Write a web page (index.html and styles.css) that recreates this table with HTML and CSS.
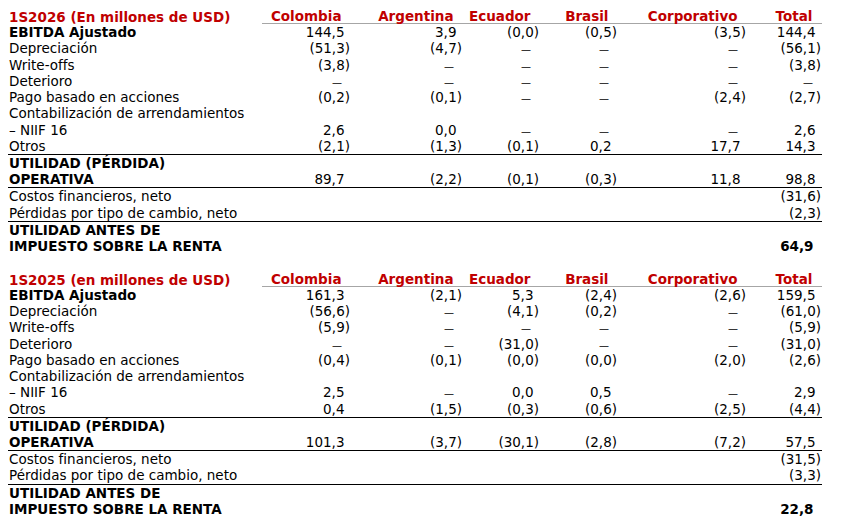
FILE: index.html
```html
<!DOCTYPE html>
<html lang="es">
<head>
<meta charset="utf-8">
<title>Conciliación EBITDA Ajustado</title>
<link rel="stylesheet" href="styles.css">
</head>
<body>
<table class="fin">
  <colgroup>
    <col class="c-lbl"><col class="c-col"><col class="c-arg"><col class="c-ecu"><col class="c-bra"><col class="c-cor"><col class="c-tot">
  </colgroup>
  <thead>
    <tr>
      <th class="title">1S2026 (En millones de USD)</th>
      <th>Colombia</th><th>Argentina</th><th>Ecuador</th><th>Brasil</th><th>Corporativo</th><th>Total</th>
    </tr>
  </thead>
  <tbody>
    <tr><td class="lbl b">EBITDA Ajustado</td><td class="num"><span class="p">144,5</span></td><td class="num"><span class="p">3,9</span></td><td class="num">(0,0)</td><td class="num">(0,5)</td><td class="num">(3,5)</td><td class="num"><span class="p">144,4</span></td></tr>
    <tr><td class="lbl">Depreciación</td><td class="num">(51,3)</td><td class="num">(4,7)</td><td class="num"><span class="d">—</span></td><td class="num"><span class="d">—</span></td><td class="num"><span class="d">—</span></td><td class="num">(56,1)</td></tr>
    <tr><td class="lbl">Write-offs</td><td class="num">(3,8)</td><td class="num"><span class="d">—</span></td><td class="num"><span class="d">—</span></td><td class="num"><span class="d">—</span></td><td class="num"><span class="d">—</span></td><td class="num">(3,8)</td></tr>
    <tr><td class="lbl">Deterioro</td><td class="num"><span class="d">—</span></td><td class="num"><span class="d">—</span></td><td class="num"><span class="d">—</span></td><td class="num"><span class="d">—</span></td><td class="num"><span class="d">—</span></td><td class="num"><span class="d">—</span></td></tr>
    <tr><td class="lbl">Pago basado en acciones</td><td class="num">(0,2)</td><td class="num">(0,1)</td><td class="num"><span class="d">—</span></td><td class="num"><span class="d">—</span></td><td class="num">(2,4)</td><td class="num">(2,7)</td></tr>
    <tr><td class="lbl">Contabilización de arrendamientos<br>– NIIF 16</td><td class="num"><span class="p">2,6</span></td><td class="num"><span class="p">0,0</span></td><td class="num"><span class="d">—</span></td><td class="num"><span class="d">—</span></td><td class="num"><span class="d">—</span></td><td class="num"><span class="p">2,6</span></td></tr>
    <tr class="rule"><td class="lbl">Otros</td><td class="num">(2,1)</td><td class="num">(1,3)</td><td class="num">(0,1)</td><td class="num"><span class="p">0,2</span></td><td class="num"><span class="p">17,7</span></td><td class="num"><span class="p">14,3</span></td></tr>
    <tr class="rule"><td class="lbl b">UTILIDAD (PÉRDIDA)<br>OPERATIVA</td><td class="num"><span class="p">89,7</span></td><td class="num">(2,2)</td><td class="num">(0,1)</td><td class="num">(0,3)</td><td class="num"><span class="p">11,8</span></td><td class="num"><span class="p">98,8</span></td></tr>
    <tr><td class="lbl">Costos financieros, neto</td><td></td><td></td><td></td><td></td><td></td><td class="num">(31,6)</td></tr>
    <tr class="rule"><td class="lbl">Pérdidas por tipo de cambio, neto</td><td></td><td></td><td></td><td></td><td></td><td class="num">(2,3)</td></tr>
    <tr><td class="lbl b">UTILIDAD ANTES DE<br>IMPUESTO SOBRE LA RENTA</td><td></td><td></td><td></td><td></td><td></td><td class="num b"><span class="pb">64,9</span></td></tr>
  </tbody>
</table>

<table class="fin">
  <colgroup>
    <col class="c-lbl"><col class="c-col"><col class="c-arg"><col class="c-ecu"><col class="c-bra"><col class="c-cor"><col class="c-tot">
  </colgroup>
  <thead>
    <tr>
      <th class="title">1S2025 (en millones de USD)</th>
      <th>Colombia</th><th>Argentina</th><th>Ecuador</th><th>Brasil</th><th>Corporativo</th><th>Total</th>
    </tr>
  </thead>
  <tbody>
    <tr><td class="lbl b">EBITDA Ajustado</td><td class="num"><span class="p">161,3</span></td><td class="num">(2,1)</td><td class="num"><span class="p">5,3</span></td><td class="num">(2,4)</td><td class="num">(2,6)</td><td class="num"><span class="p">159,5</span></td></tr>
    <tr><td class="lbl">Depreciación</td><td class="num">(56,6)</td><td class="num"><span class="d">—</span></td><td class="num">(4,1)</td><td class="num">(0,2)</td><td class="num"><span class="d">—</span></td><td class="num">(61,0)</td></tr>
    <tr><td class="lbl">Write-offs</td><td class="num">(5,9)</td><td class="num"><span class="d">—</span></td><td class="num"><span class="d">—</span></td><td class="num"><span class="d">—</span></td><td class="num"><span class="d">—</span></td><td class="num">(5,9)</td></tr>
    <tr><td class="lbl">Deterioro</td><td class="num"><span class="d">—</span></td><td class="num"><span class="d">—</span></td><td class="num">(31,0)</td><td class="num"><span class="d">—</span></td><td class="num"><span class="d">—</span></td><td class="num">(31,0)</td></tr>
    <tr><td class="lbl">Pago basado en acciones</td><td class="num">(0,4)</td><td class="num">(0,1)</td><td class="num">(0,0)</td><td class="num">(0,0)</td><td class="num">(2,0)</td><td class="num">(2,6)</td></tr>
    <tr><td class="lbl">Contabilización de arrendamientos<br>– NIIF 16</td><td class="num"><span class="p">2,5</span></td><td class="num"><span class="d">—</span></td><td class="num"><span class="p">0,0</span></td><td class="num"><span class="p">0,5</span></td><td class="num"><span class="d">—</span></td><td class="num"><span class="p">2,9</span></td></tr>
    <tr class="rule"><td class="lbl">Otros</td><td class="num"><span class="p">0,4</span></td><td class="num">(1,5)</td><td class="num">(0,3)</td><td class="num">(0,6)</td><td class="num">(2,5)</td><td class="num">(4,4)</td></tr>
    <tr class="rule"><td class="lbl b">UTILIDAD (PÉRDIDA)<br>OPERATIVA</td><td class="num"><span class="p">101,3</span></td><td class="num">(3,7)</td><td class="num">(30,1)</td><td class="num">(2,8)</td><td class="num">(7,2)</td><td class="num"><span class="p">57,5</span></td></tr>
    <tr><td class="lbl">Costos financieros, neto</td><td></td><td></td><td></td><td></td><td></td><td class="num">(31,5)</td></tr>
    <tr class="rule"><td class="lbl">Pérdidas por tipo de cambio, neto</td><td></td><td></td><td></td><td></td><td></td><td class="num">(3,3)</td></tr>
    <tr><td class="lbl b">UTILIDAD ANTES DE<br>IMPUESTO SOBRE LA RENTA</td><td></td><td></td><td></td><td></td><td></td><td class="num b"><span class="pb">22,8</span></td></tr>
  </tbody>
</table>
</body>
</html>
```

FILE: styles.css
```css
body {
  margin: 0;
  padding: 7px 0 0 8px;
  background: #ffffff;
  color: #000000;
  font-family: "DejaVu Sans", Verdana, sans-serif;
  font-size: 13.5px;
}

.fin {
  width: 814px;
  table-layout: fixed;
  border-collapse: separate;
  border-spacing: 0;
}

.fin + .fin {
  margin-top: 15.5px;
}

.c-lbl { width: 254px; }
.c-col { width: 89px; }
.c-arg { width: 112px; }
.c-ecu { width: 77px; }
.c-bra { width: 78px; }
.c-cor { width: 129px; }
.c-tot { width: 75px; }

.fin th,
.fin td {
  padding: 0;
  line-height: 16.22px;
  font-weight: normal;
  vertical-align: bottom;
}

.fin th {
  color: #c00000;
  font-weight: bold;
  text-align: right;
  padding: 2px 9.5px 0 0;
  line-height: 14.22px;
  border-bottom: 1px solid #a6a6a6;
  white-space: nowrap;
}

.fin th.title {
  text-align: left;
  padding-left: 1px;
  padding-right: 0;
  border-bottom: none;
}

.fin td.lbl {
  text-align: left;
  padding-left: 1px;
  white-space: nowrap;
}

.fin td.num {
  text-align: right;
  padding-right: 1px;
  white-space: nowrap;
}

.fin tr.rule td {
  border-bottom: 1px solid #000000;
}

.fin .b {
  font-weight: bold;
}

.p {
  padding-right: 5.5px;
}

.pb {
  padding-right: 7.5px;
}

.d {
  font-size: 10px;
  line-height: 10px;
  padding-right: 8px;
}
```
